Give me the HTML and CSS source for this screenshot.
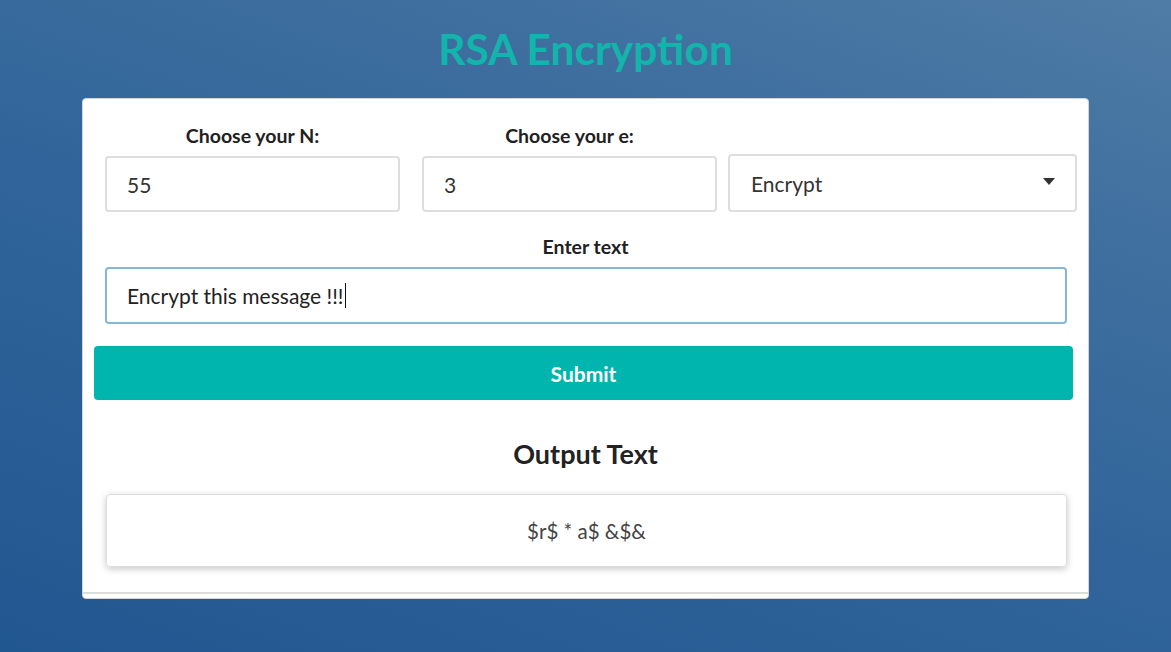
FILE: index.html
```html
<!DOCTYPE html>
<html lang="en">
<head>
<meta charset="utf-8">
<title>RSA Encryption</title>
<link rel="stylesheet" href="styles.css">
</head>
<body>
  <h1 class="title">RSA Encryption</h1>
  <main class="card">
    <div class="row-params">
      <label class="field-label">Choose your N:</label>
      <label class="field-label">Choose your e:</label>
      <span class="field-label"></span>
      <div class="input">55</div>
      <div class="input">3</div>
      <div class="select">
        <span>Encrypt</span>
        <svg class="caret" width="12" height="7" viewBox="0 0 12 7"><path d="M0 0 L12 0 L6 7 Z" fill="#333"/></svg>
      </div>
    </div>
    <label class="field-label text-label">Enter text</label>
    <div class="input focused">Encrypt this message !!!<span class="cursor"></span></div>
    <button class="submit" type="button">Submit</button>
    <h2 class="output-title">Output Text</h2>
    <div class="output-box">$r$ * a$ &amp;$&amp;</div>
    <div class="card-foot"></div>
  </main>
</body>
</html>
```
FILE: styles.css
```css
html, body {
  margin: 0;
  padding: 0;
}
body {
  min-height: 652px;
  font-family: Lato, "Open Sans", sans-serif;
  background: linear-gradient(20deg, #215790 0%, #30649a 45%, #3f6f9f 75%, #4f7ca6 100%);
  box-sizing: border-box;
  padding-top: 24px;
  overflow: hidden;
}
.title {
  margin: 0 0 24px;
  text-align: center;
  font-size: 42.5px;
  line-height: 50px;
  font-weight: 700;
  color: #12b4ab;
}
.card {
  width: 1007px;
  box-sizing: border-box;
  margin: 0 auto;
  background: #fff;
  border: 1px solid #d4d4d5;
  border-radius: 4px;
  padding: 25px 0 0 0;
}
.row-params {
  display: grid;
  grid-template-columns: 317px 306px 349px;
  column-gap: 0;
  row-gap: 7px;
  margin-left: 22px;
  align-items: end;
}
.row-params .field-label,
.row-params .input {
  width: 295px;
}
.field-label {
  display: block;
  text-align: center;
  font-size: 19.5px;
  line-height: 23px;
  font-weight: 700;
  color: #212121;
}
.text-label {
  margin: 23px 0 9px;
}
.input {
  box-sizing: border-box;
  height: 56px;
  border: 2px solid #dededf;
  border-radius: 4px;
  padding: 0 20px;
  display: flex;
  align-items: center;
  font-size: 21px;
  color: #333;
}
.input.focused {
  margin: 0 21px 0 22px;
  height: 57px;
  border-color: #85b7d9;
  color: #222;
}
.cursor {
  display: inline-block;
  width: 1px;
  height: 25px;
  background: #111;
  margin-left: 1px;
}
.select {
  box-sizing: border-box;
  height: 58px;
  width: 349px;
  border: 2px solid #dededf;
  border-radius: 4px;
  padding: 0 20px 0 21px;
  display: flex;
  align-items: center;
  justify-content: space-between;
  font-size: 21px;
  color: #333;
}
.caret {
  display: block;
  margin-top: -3px;
}
.submit {
  display: block;
  box-sizing: border-box;
  width: 979px;
  height: 54px;
  margin: 22px 0 0 11px;
  border: none;
  border-radius: 4px;
  background: #00b5ad;
  color: #fff;
  font-family: Lato, "Open Sans", sans-serif;
  font-size: 21px;
  font-weight: 700;
}
.output-title {
  margin: 38px 0 24px;
  text-align: center;
  font-size: 27px;
  line-height: 32px;
  font-weight: 700;
  color: #222;
}
.output-box {
  box-sizing: border-box;
  height: 73px;
  margin: 0 21px 0 23px;
  border: 1px solid #ddd;
  border-radius: 4px;
  box-shadow: 0 2px 7px rgba(0, 0, 0, 0.22);
  display: flex;
  align-items: center;
  justify-content: center;
  font-size: 20.5px;
  color: #444;
}
.card-foot {
  margin-top: 25px;
  height: 4px;
  border-top: 2px solid #dcdcdc;
}
```
